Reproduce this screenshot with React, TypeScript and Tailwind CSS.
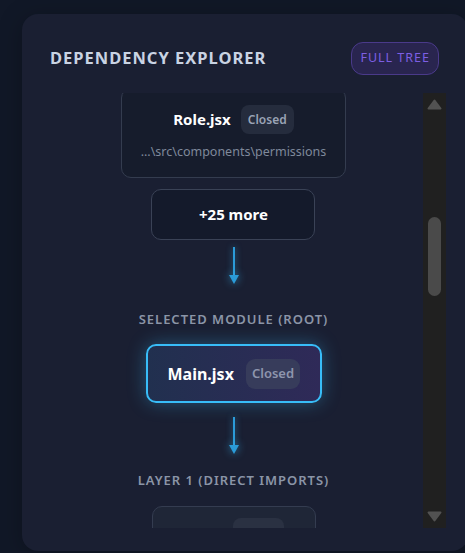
import { useLayoutEffect, useRef } from "react";

function Badge({ big }: { big?: boolean }) {
  if (big) {
    return (
      <span className="flex h-[30px] items-center rounded-[9px] bg-[#373c5b] px-[6px] text-[13px] font-semibold text-[#8e95ad]">
        Closed
      </span>
    );
  }
  return (
    <span className="flex h-[29px] items-center rounded-[8px] bg-[#252c3d] px-[7px] text-[12px] font-semibold text-[#9aa3b5]">
      Closed
    </span>
  );
}

function Connector({ className }: { className: string }) {
  return (
    <div className={`flex flex-col items-center ${className}`}>
      <div className="h-[28px] w-[2px] bg-[#2b9bd8] shadow-[0_0_6px_rgba(56,189,248,0.6)]" />
      <svg
        width="10"
        height="9"
        viewBox="0 0 10 9"
        className="drop-shadow-[0_0_4px_rgba(56,189,248,0.7)]"
      >
        <polygon points="0,0 10,0 5,9" fill="#2b9bd8" />
      </svg>
    </div>
  );
}

function Label({ text, className }: { text: string; className: string }) {
  return (
    <div
      className={`text-[13px] font-semibold leading-[18px] tracking-[0.075em] text-[#8b95a7] ${className}`}
    >
      {text}
    </div>
  );
}

export default function App() {
  const scrollRef = useRef<HTMLDivElement>(null);

  useLayoutEffect(() => {
    if (scrollRef.current) {
      scrollRef.current.scrollTop = 5;
    }
  }, []);

  return (
    <div className="h-[553px] w-full overflow-hidden bg-[#111827] pl-[22px] pt-[14px] font-['Noto_Sans','Open_Sans',sans-serif]">
      <div className="flex h-[537px] w-[446px] flex-col rounded-[16px] bg-[#1a1f32] px-[22px] pt-[28px] pb-[23px] shadow-[0_4px_24px_rgba(0,0,0,0.25)]">
        <div className="flex h-[33px] items-center justify-between pl-[6px] pr-[7px]">
          <h1 className="text-[16.5px] font-bold tracking-[0.06em] text-[#c9d3e3]">
            DEPENDENCY EXPLORER
          </h1>
          <button className="flex h-[33px] items-center rounded-[12px] border border-[#4a3a8a] bg-[#29254f] px-[8px] text-[12.5px] tracking-[0.08em] text-[#7d5fe3]">
            FULL TREE
          </button>
        </div>

        <div className="mt-[18px] flex h-[435px]">
          <div
            ref={scrollRef}
            className="h-[435px] flex-1 overflow-y-scroll [scrollbar-width:none]"
          >
            <div className="flex flex-col items-center pb-[20px]">
              <div className="flex flex-col items-center gap-[11px]">
                <div className="flex flex-col items-center rounded-[10px] border border-[#343c4f] bg-[#161c2c] px-[19px] pt-[16px] pb-[16px]">
                  <div className="flex items-center gap-[10px]">
                    <span className="text-[15px] font-bold text-white">Role.jsx</span>
                    <Badge />
                  </div>
                  <div className="mt-[9px] text-[12.5px] leading-[18px] text-[#7f899b]">
                    ...\src\components\permissions
                  </div>
                </div>
                <div className="flex h-[51px] w-[164px] items-center justify-center rounded-[10px] border border-[#3a4256] bg-[#141a2b] text-[15px] font-bold text-white">
                  +25 more
                </div>
              </div>

              <Connector className="mt-[7px]" />
              <Label text="SELECTED MODULE (ROOT)" className="mt-[26px]" />

              <div className="mt-[16px] flex h-[59px] w-[176px] items-center gap-[12px] rounded-[10px] border-2 border-[#38bdf8] bg-[linear-gradient(90deg,#21304f,#2f2a58)] px-[20px] shadow-[0_0_18px_rgba(56,189,248,0.35)]">
                <span className="text-[16px] font-bold text-white">Main.jsx</span>
                <Badge big />
              </div>

              <Connector className="mt-[14px]" />
              <Label text="LAYER 1 (DIRECT IMPORTS)" className="mt-[17px]" />

              <div className="mt-[17px] flex h-[60px] w-[164px] items-start justify-start rounded-[10px] border border-[#343c50] bg-[#1f2637] pt-[11px] pl-[80px]">
                <div className="h-[29px] w-[51px] rounded-[8px] bg-[#2a3142]" />
              </div>
            </div>
          </div>

          <div className="flex w-[23px] flex-col bg-[#202020]">
            <div className="flex h-[23px] items-center justify-center">
              <svg width="15" height="11" viewBox="0 0 15 11">
                <polygon
                  points="7.5,1.5 13.5,9.5 1.5,9.5"
                  fill="#525252"
                  stroke="#525252"
                  strokeWidth="2"
                  strokeLinejoin="round"
                />
              </svg>
            </div>
            <div className="flex-1">
              <div className="mx-[5px] mt-[101px] h-[79px] rounded-full bg-[#4a4a4a]" />
            </div>
            <div className="flex h-[23px] items-center justify-center">
              <svg width="15" height="11" viewBox="0 0 15 11">
                <polygon
                  points="1.5,1.5 13.5,1.5 7.5,9.5"
                  fill="#525252"
                  stroke="#525252"
                  strokeWidth="2"
                  strokeLinejoin="round"
                />
              </svg>
            </div>
          </div>
        </div>
      </div>
    </div>
  );
}
